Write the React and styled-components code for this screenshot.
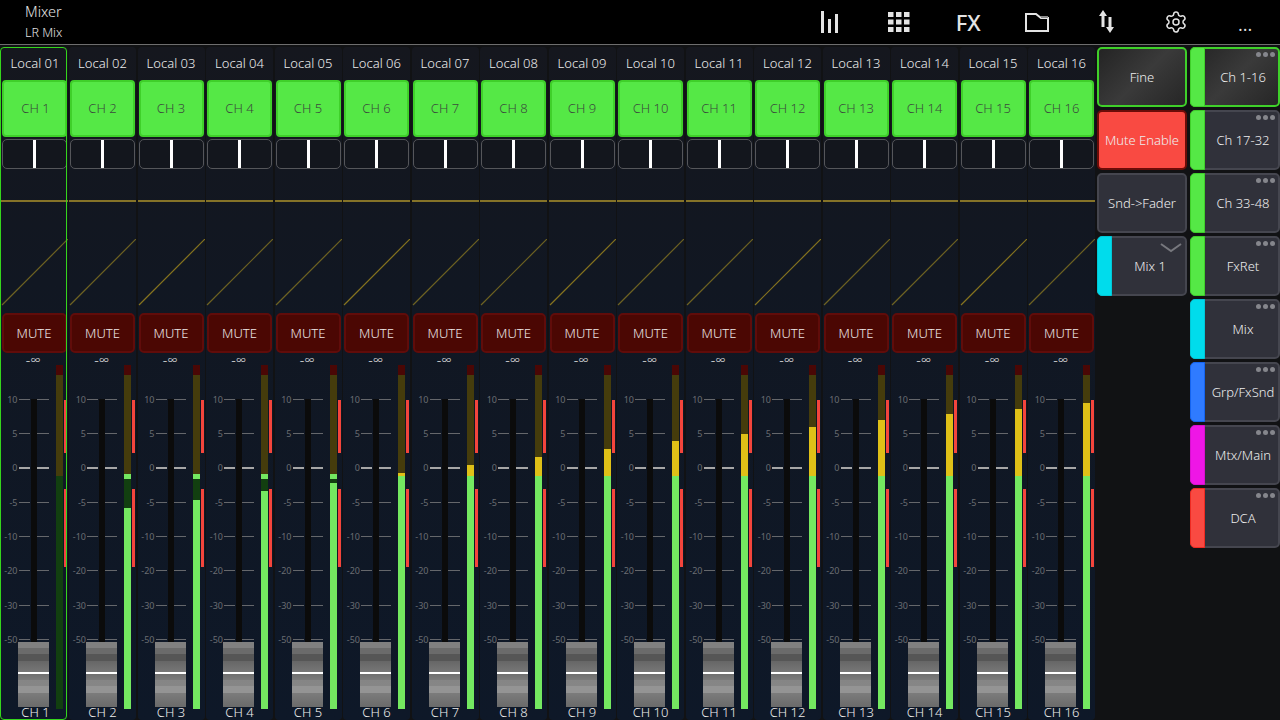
import styled, { createGlobalStyle } from "styled-components";
import { Settings } from "lucide-react";

const METER_TOP = 365;
const ZERO_Y = 476;
const METER_BOTTOM = 709;

// top of the lit part of each meter, in page pixels. null = no signal
const levels = [null, 508, 500, 491, 483, 473, 465, 457, 449, 441, 434, 427, 420, 414, 409, 403];
const scale = ["10", "5", "0", "-5", "-10", "-20", "-30", "-50"];

const GlobalStyle = createGlobalStyle`
  html, body {
    margin: 0;
    padding: 0;
    background: #000;
    overflow: hidden;
  }
  * {
    box-sizing: border-box;
  }
  body {
    font-family: "Noto Sans", "Open Sans", sans-serif;
    font-weight: 300;
  }
`;

const Page = styled.div`
  width: 1280px;
  height: 720px;
  display: flex;
  flex-direction: column;
  background: #111214;
  overflow: hidden;
`;

const Header = styled.header`
  height: 45px;
  flex: none;
  display: flex;
  justify-content: space-between;
  background: #000;
  border-bottom: 1px solid #6e6e6e;
`;

const Title = styled.div`
  padding-left: 25px;
  color: #e4e4e4;
  .main {
    font-size: 14.5px;
    line-height: 20px;
    margin-top: 1px;
  }
  .sub {
    font-size: 12.5px;
    line-height: 20px;
    margin-top: 2px;
  }
`;

const Toolbar = styled.nav`
  width: 485px;
  display: grid;
  grid-template-columns: repeat(7, 1fr);
`;

const ToolButton = styled.div`
  display: flex;
  align-items: center;
  justify-content: center;
  color: #e4e4e4;
`;

const FxLabel = styled.span`
  font-size: 22px;
  font-weight: 500;
  line-height: 1;
`;

const MoreDots = styled.span`
  font-size: 16px;
  font-weight: 400;
  margin-top: 6px;
  letter-spacing: 0.5px;
`;

const Body = styled.main`
  flex: 1;
  display: flex;
  padding-top: 2px;
  min-height: 0;
`;

const Bank = styled.section`
  width: 1096px;
  display: grid;
  grid-template-columns: repeat(16, 1fr);
`;

const Strip = styled.div`
  position: relative;
  display: flex;
  flex-direction: column;
  margin: 0 1px 0 0.5px;
  height: 673px;
  border-radius: 4px;
  background: linear-gradient(180deg, #15171e 0%, #111722 35%, #0e1828 100%);

  ${(p) =>
    p.$selected &&
    `&::after {
      content: "";
      position: absolute;
      inset: 0 0.5px 0 -0.5px;
      border: 1px solid #35d51c;
      border-radius: 4px;
      pointer-events: none;
    }`}
`;

const StripName = styled.div`
  height: 33px;
  flex: none;
  padding-top: 6px;
  padding-left: ${(p) => (p.$selected ? 2 : 0)}px;
  text-align: center;
  font-size: 13px;
  line-height: 20px;
  color: #eee;
`;

const ChannelButton = styled.div`
  height: 57px;
  flex: none;
  margin: 0 1px;
  padding-bottom: 2px;
  padding-left: ${(p) => (p.$selected ? 3 : 0)}px;
  display: flex;
  align-items: center;
  justify-content: center;
  background: #55e846;
  border: 2px solid #3fd02a;
  border-radius: 4px;
  font-size: 13px;
  color: #3b4a3d;
`;

const PanBox = styled.div`
  height: 30px;
  flex: none;
  margin: 2px 1px 0;
  display: flex;
  justify-content: center;
  border: 1px solid #55565a;
  border-radius: 5px;
  background: #13161d;

  &::before {
    content: "";
    width: 3px;
    background: #fff;
  }
`;

const EqArea = styled.div`
  height: 144px;
  flex: none;
  padding-top: 31px;
`;

const FlatLine = styled.div`
  height: 2px;
  background: #857328;
`;

const Curve = styled.svg`
  display: block;
  width: 100%;
  height: 67px;
  margin-top: 37px;
`;

const MuteButton = styled.div`
  height: 40px;
  flex: none;
  margin: 0 1px;
  display: flex;
  align-items: center;
  justify-content: center;
  background: #4b0703;
  border: 2px solid #600c0a;
  border-radius: 5px;
  font-size: 13px;
  color: #eee8e8;
`;

const GainReadout = styled.div`
  height: 12px;
  flex: none;
  text-align: center;
  font-size: 14px;
  line-height: 14px;
  color: #e0e0e0;
  padding-right: 2px;
`;

const FaderRow = styled.div`
  position: relative;
  height: 344px;
  flex: none;
  display: flex;
  justify-content: space-between;
  padding-right: 1px;
`;

const Scale = styled.div`
  position: relative;
  width: 49px;
  padding-top: 17px;
`;

const ScaleRow = styled.div`
  height: 34.35px;
  display: grid;
  grid-template-columns: 18px 12px 6px 12px;
  align-items: center;
  position: relative;
  z-index: 1;

  &::before,
  &::after {
    content: "";
    grid-row: 1;
    height: ${(p) => (p.$zero ? 2 : 1)}px;
    background: ${(p) => (p.$zero ? "#a6a6a6" : "#65676b")};
  }
  &::before {
    grid-column: 2;
    margin-right: 1px;
  }
  &::after {
    grid-column: 4;
  }
`;

const ScaleLabel = styled.span`
  grid-column: 1;
  grid-row: 1;
  padding-right: 1px;
  font-size: 9px;
  font-weight: 400;
  color: #6a6d72;
  text-align: right;
`;

const Track = styled.div`
  position: absolute;
  top: 34px;
  left: 30px;
  width: 6px;
  height: 244px;
  background: #0b0b0b;
`;

const FaderCap = styled.div`
  position: absolute;
  top: 277px;
  left: 17px;
  width: 31px;
  height: 65px;
  z-index: 2;
  background: linear-gradient(
    180deg,
    #808080 0,
    #808080 6px,
    #6b6b6b 6px,
    #6b6b6b 12px,
    #565656 12px,
    #565656 19px,
    #666 19px,
    #777 30px,
    #fff 30px,
    #fff 32px,
    #6f6f6f 32px,
    #7b7b7b 38px,
    #858585 38px,
    #868686 44px,
    #949494 44px,
    #949494 51px,
    #7c7c7c 51px,
    #6a6a6a 65px
  );
`;

const MeterGroup = styled.div`
  display: flex;
  gap: 1px;
`;

const Meter = styled.div`
  width: 7px;
  height: 344px;
  display: flex;
  flex-direction: column;
`;

const MeterCap = styled.div`
  height: 10px;
  background: #4a0705;
`;

const MeterHigh = styled.div`
  height: ${ZERO_Y - METER_TOP - 10}px;
  display: flex;
  align-items: flex-end;
  background: #453c0c;
`;

const MeterLow = styled.div`
  position: relative;
  height: ${METER_BOTTOM - ZERO_Y}px;
  display: flex;
  align-items: flex-end;
  background: #123f10;
`;

const MeterFill = styled.div`
  width: 100%;
  background: ${(p) => (p.$hot ? "#dfc017" : "#74e860")};
`;

const PeakMark = styled.div`
  position: absolute;
  top: -2px;
  left: 0;
  width: 100%;
  height: 5px;
  background: #74e860;
`;

const ClipColumn = styled.div`
  width: 3px;
  padding-top: 35px;
  display: flex;
  flex-direction: column;
  gap: 36px;
`;

const ClipBar = styled.div`
  height: ${(p) => p.$size}px;
  background: #f4453c;
`;

const StripLabel = styled.div`
  padding-left: ${(p) => (p.$selected ? 3 : 0)}px;
  text-align: center;
  font-size: 13px;
  line-height: 12px;
  margin-top: -3px;
  color: #eee;
  position: relative;
  z-index: 3;
`;

const SidePanel = styled.aside`
  width: 184px;
  padding-left: 1px;
  display: grid;
  grid-template-columns: 90px 90px;
  grid-auto-flow: column;
  grid-template-rows: repeat(8, 60px);
  column-gap: 3px;
  row-gap: 3px;
`;

const PanelButton = styled.div`
  position: relative;
  display: flex;
  align-items: stretch;
  border-radius: 5px;
  border: 2px solid ${(p) => p.$edge || "#45464f"};
  background: ${(p) => p.$fill || "#30313a"};
  font-size: 13px;
  color: #eee;
  grid-column: ${(p) => p.$col || "auto"};
`;

const Stripe = styled.div`
  flex: none;
  margin: -2px 0 -2px -2px;
  width: 15px;
  border-radius: 5px 0 0 5px;
  background: ${(p) => p.$color};
  border: 1px solid ${(p) => p.$edge || p.$color};
`;

const ButtonText = styled.div`
  flex: 1;
  display: flex;
  align-items: center;
  justify-content: center;
  padding-left: ${(p) => (p.$striped ? 3 : 0)}px;
  white-space: nowrap;
`;

const Dots = styled.div`
  position: absolute;
  top: 3px;
  right: 3px;
  display: flex;
  gap: 2px;
  span {
    width: 5px;
    height: 5px;
    border-radius: 50%;
    background: #85868c;
  }
`;

const Chevron = styled.svg`
  position: absolute;
  top: 5px;
  right: 3px;
  width: 22px;
  height: 10px;
`;

const selectedFill = "linear-gradient(135deg, #242424 0%, #3a3a3a 50%, #262626 100%)";

const tabs = [
  { label: "Ch 1-16", color: "#55e846", edge: "#3fd02a", active: true },
  { label: "Ch 17-32", color: "#55e846", edge: "#3fd02a" },
  { label: "Ch 33-48", color: "#55e846", edge: "#3fd02a" },
  { label: "FxRet", color: "#55e846", edge: "#3fd02a" },
  { label: "Mix", color: "#00dcec", edge: "#00c8d8" },
  { label: "Grp/FxSnd", color: "#2f7bff", edge: "#1464f0" },
  { label: "Mtx/Main", color: "#ee16e6", edge: "#d810d0" },
  { label: "DCA", color: "#f94a42", edge: "#ee2a22" },
];

const BarsIcon = () => (
  <svg width="19" height="22" viewBox="0 0 19 22" fill="#e4e4e4">
    <rect x="1" y="0" width="3" height="22" />
    <rect x="8" y="8" width="3" height="14" />
    <rect x="15" y="3" width="3" height="19" />
  </svg>
);

const GridIcon = () => (
  <svg width="22" height="20" viewBox="0 0 22 20" fill="#e4e4e4">
    {[0, 8, 16].map((x) =>
      [0, 7.5, 15].map((y) => <rect key={`${x}-${y}`} x={x} y={y} width="5.5" height="5" />)
    )}
  </svg>
);

const FolderIcon = () => (
  <svg width="24" height="19" viewBox="0 0 24 19" fill="none" stroke="#e4e4e4" strokeWidth="2">
    <path d="M1 1h10l5 4h7v13H1z" />
    <path d="M16 3h7v2h-7z" fill="#8c8c8c" stroke="none" />
  </svg>
);

const ArrowsIcon = () => (
  <svg width="15" height="24" viewBox="0 0 15 24" fill="#e4e4e4">
    <path d="M4 0l4 6H5.500v11h-3V6H0z" />
    <path d="M11 23l4-6h-2.500V7h-3v10H7z" />
  </svg>
);

const ChannelStrip = ({ index, level }) => {
  const name = `Local ${String(index + 1).padStart(2, "0")}`;
  const label = `CH ${index + 1}`;
  const selected = index === 0;
  const hotHeight = level && level < ZERO_Y ? ZERO_Y - level : 0;
  const lowHeight = level ? METER_BOTTOM - Math.max(level, ZERO_Y) : 0;
  const showPeak = level && level > ZERO_Y;
  const curveColor = index % 3 === 2 ? "#85731f" : "#6d6222";

  return (
    <Strip $selected={selected}>
      <StripName $selected={selected}>{name}</StripName>
      <ChannelButton $selected={selected}>{label}</ChannelButton>
      <PanBox />
      <EqArea>
        <FlatLine />
        <Curve viewBox="0 0 66 67" preserveAspectRatio="none">
          <line x1="1" y1="66" x2="66" y2="0" stroke={curveColor} strokeWidth="1.2" />
        </Curve>
      </EqArea>
      <MuteButton>MUTE</MuteButton>
      <GainReadout>-∞</GainReadout>
      <FaderRow>
        <Scale>
          <Track />
          {scale.map((mark) => (
            <ScaleRow key={mark} $zero={mark === "0"}>
              <ScaleLabel>{mark}</ScaleLabel>
            </ScaleRow>
          ))}
          <FaderCap />
        </Scale>
        <MeterGroup>
          <Meter>
            <MeterCap />
            <MeterHigh>
              <MeterFill $hot style={{ height: hotHeight }} />
            </MeterHigh>
            <MeterLow>
              {showPeak && <PeakMark />}
              <MeterFill style={{ height: lowHeight }} />
            </MeterLow>
          </Meter>
          <ClipColumn>
            <ClipBar $size={53} />
            <ClipBar $size={78} />
          </ClipColumn>
        </MeterGroup>
      </FaderRow>
      <StripLabel $selected={selected}>{label}</StripLabel>
    </Strip>
  );
};

export default function App() {
  return (
    <Page>
      <GlobalStyle />
      <Header>
        <Title>
          <div className="main">Mixer</div>
          <div className="sub">LR Mix</div>
        </Title>
        <Toolbar>
          <ToolButton>
            <BarsIcon />
          </ToolButton>
          <ToolButton>
            <GridIcon />
          </ToolButton>
          <ToolButton>
            <FxLabel>FX</FxLabel>
          </ToolButton>
          <ToolButton>
            <FolderIcon />
          </ToolButton>
          <ToolButton>
            <ArrowsIcon />
          </ToolButton>
          <ToolButton>
            <Settings size={24} strokeWidth={1.5} />
          </ToolButton>
          <ToolButton>
            <MoreDots>...</MoreDots>
          </ToolButton>
        </Toolbar>
      </Header>
      <Body>
        <Bank>
          {levels.map((level, index) => (
            <ChannelStrip key={index} index={index} level={level} />
          ))}
        </Bank>
        <SidePanel>
          <PanelButton $col={1} $edge="#3fd02a" $fill={selectedFill}>
            <ButtonText>Fine</ButtonText>
          </PanelButton>
          <PanelButton $col={1} $edge="#6b0c08" $fill="#f94a42">
            <ButtonText>Mute Enable</ButtonText>
          </PanelButton>
          <PanelButton $col={1}>
            <ButtonText>Snd-&gt;Fader</ButtonText>
          </PanelButton>
          <PanelButton $col={1}>
            <Stripe $color="#00dcec" $edge="#00c8d8" />
            <ButtonText $striped>Mix 1</ButtonText>
            <Chevron viewBox="0 0 22 10" fill="none" stroke="#77787e" strokeWidth="2">
              <path d="M1 1l10 7 10-7" />
            </Chevron>
          </PanelButton>
          {tabs.map((tab) => (
            <PanelButton
              key={tab.label}
              $col={2}
              $edge={tab.active ? "#3fd02a" : undefined}
              $fill={tab.active ? selectedFill : undefined}
            >
              <Stripe $color={tab.color} $edge={tab.edge} />
              <ButtonText $striped>{tab.label}</ButtonText>
              <Dots>
                <span />
                <span />
                <span />
              </Dots>
            </PanelButton>
          ))}
        </SidePanel>
      </Body>
    </Page>
  );
}
